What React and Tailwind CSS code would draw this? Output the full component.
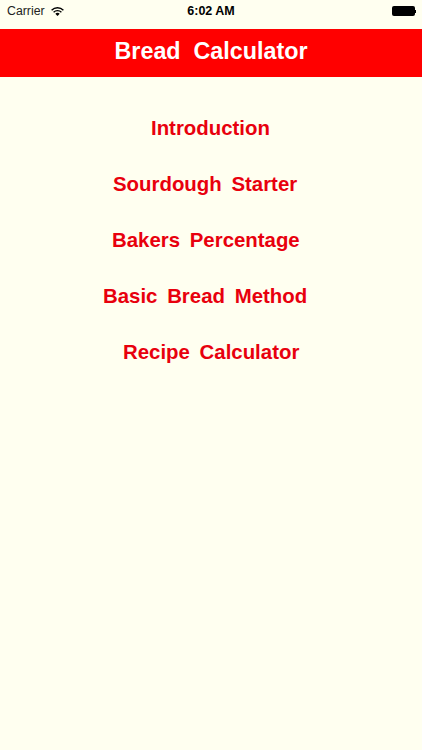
const MENU = [
  { label: 'Introduction', cls: 'ml-[151px]' },
  { label: 'Sourdough  Starter', cls: 'ml-[113px]' },
  { label: 'Bakers  Percentage', cls: 'ml-[112px]' },
  { label: 'Basic  Bread  Method', cls: 'ml-[103px]' },
  { label: 'Recipe  Calculator', cls: 'ml-[123px]' },
];

function StatusBar() {
  return (
    <div className="relative mb-[7px] flex h-[22px] items-center pl-[7px] pr-[6px] text-[12.3px] text-black">
      <span className="text-[#222]">Carrier</span>
      <svg viewBox="0 0 13 9" className="ml-[6px] h-[9px] w-[13px]" fill="none" stroke="#000">
        <path d="M0.6 3.2a8.4 8.4 0 0 1 11.8 0" strokeWidth="1.4" />
        <path d="M2.6 5.2a5.6 5.6 0 0 1 7.8 0" strokeWidth="1.4" />
        <path d="M6.5 9L4.3 6.8a3.2 3.2 0 0 1 4.4 0z" fill="#000" stroke="none" />
      </svg>
      <span className="absolute left-0 right-0 text-center text-[12.5px] font-bold">6:02 AM</span>
      <div className="ml-auto flex items-center">
        <div className="h-[10px] w-[23px] rounded-[2px] bg-black" />
        <div className="h-[3px] w-[1.5px] bg-black" />
      </div>
    </div>
  );
}

export default function App() {
  return (
    <div className="flex h-[750px] w-[422px] flex-col overflow-hidden bg-[#fffff0] font-['Liberation_Sans',Arial,sans-serif]">
      <StatusBar />
      <div className="flex h-[48px] items-center justify-center bg-[#ff0000] pb-[4px] whitespace-pre text-[23.3px] font-bold text-white">
        Bread  Calculator
      </div>
      <div className="flex flex-col gap-[32px] pt-[39px]">
        {MENU.map((item) => (
          <div key={item.label} className={`h-[24px] whitespace-pre text-[20.4px] leading-[24px] font-bold text-[#e8000d] [word-spacing:-0.8px] ${item.cls}`}>
            {item.label}
          </div>
        ))}
      </div>
    </div>
  );
}
